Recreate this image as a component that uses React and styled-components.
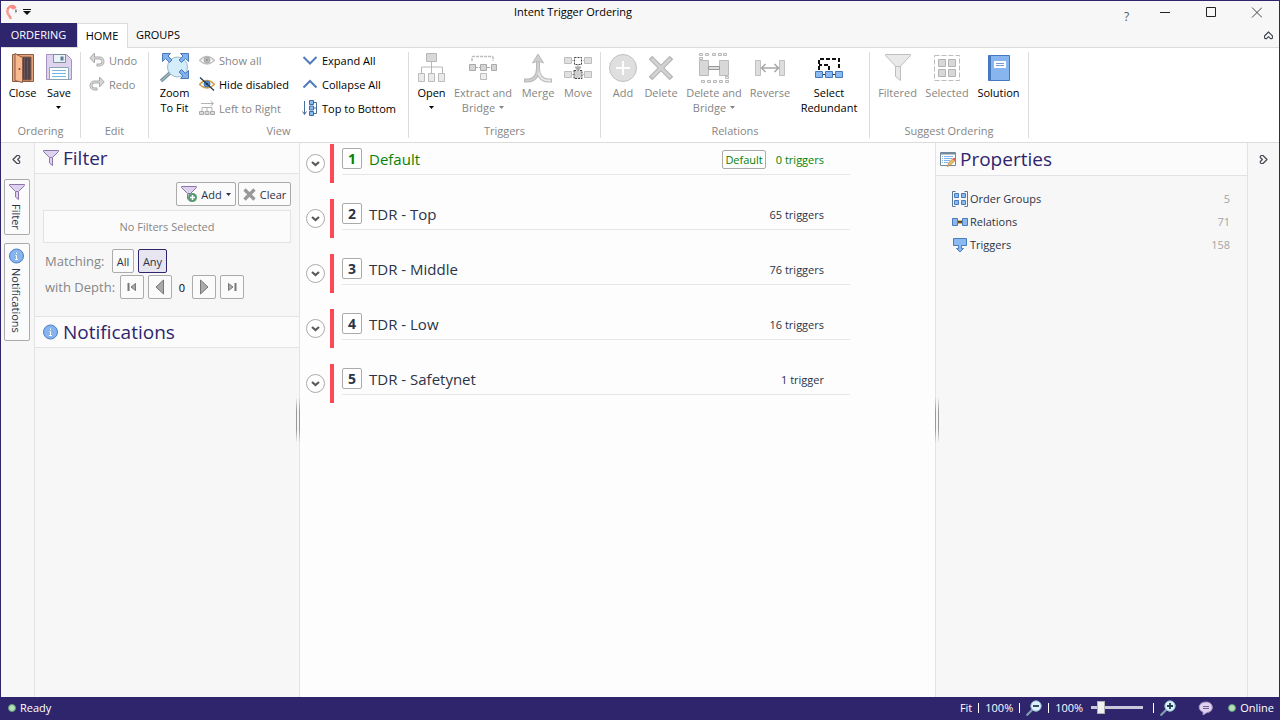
import React from "react";
import styled, { createGlobalStyle, css } from "styled-components";

const c = {
  brand: "#2f256d",
  chrome: "#f7f7f7",
  panel: "#f7f7f7",
  head: "#fbfbfb",
  canvas: "#fdfdfd",
  line: "#e3e3e6",
  ribbonLine: "#dcdcdc",
  muted: "#868686",
  text: "#2b3447",
  frame: "#ababab",
  green: "#058205",
  red: "#ff4a55",
};

const GlobalStyle = createGlobalStyle`
  * { box-sizing: border-box; }
  body {
    margin: 0;
    font-family: "Open Sans", "Noto Sans", sans-serif;
    font-size: 11px;
    line-height: 15px;
    color: #000;
  }
  button, input { font: inherit; color: inherit; }
  button { margin: 0; padding: 0; border: 0; background: none; white-space: nowrap; }
  h1, h2, p, ul, ol, dl, dd { margin: 0; padding: 0; font-weight: 400; }
  svg { display: block; flex: none; }
`;

const Window = styled.div`
  display: flex;
  flex-direction: column;
  min-height: 100vh;
  border: 1px solid ${c.brand};
  border-bottom: 0;
  background: ${c.chrome};
`;

/* Title bar */
const TitleBar = styled.header`
  display: flex;
  height: 22px;
`;
const QuickAccess = styled.div`
  display: flex;
  align-items: center;
  gap: 5px;
  width: 30px;
  padding-left: 5px;
`;
const WindowTitle = styled.h1`
  flex: 1;
  text-align: center;
  font-size: 11px;
  line-height: 22px;
`;
const CaptionButton = styled.button`
  display: flex;
  align-items: center;
  justify-content: center;
  width: 46px;
  height: 22px;
`;
const HelpButton = styled.button`
  width: 26px;
  padding: 8px 3px 0 0;
  font-size: 12px;
  color: #555;
`;

/* Tabs */
const TabBar = styled.nav`
  display: flex;
  align-items: stretch;
  height: 24px;
`;
const Tab = styled.button`
  padding: 0 8px 2px 7px;
  border: 1px solid transparent;
  border-width: 1px 1px 0;
  ${(p) => p.$kind === "file" && css`
    width: 76px;
    background: ${c.brand};
    color: #fff;
    border-color: ${c.brand};
  `}
  ${(p) => p.$kind === "active" && css`
    width: 51px;
    height: 25px;
    background: #fff;
    border-color: ${c.ribbonLine};
    position: relative;
  `}
`;
const CollapseRibbon = styled.button`
  margin-left: auto;
  width: 21px;
  display: grid;
  place-items: center;
`;

/* Ribbon */
const RibbonBar = styled.div`
  display: flex;
  height: 96px;
  padding: 4px 0;
  background: #fff;
  border: 1px solid ${c.ribbonLine};
  border-width: 1px 0;
`;
const RibbonGroup = styled.section`
  display: flex;
  flex-direction: column;
  padding: 0 ${(p) => p.$pad || 3}px;
  border-right: 1px solid ${c.ribbonLine};
`;
const GroupTools = styled.div`
  display: flex;
  flex: 1;
  gap: ${(p) => p.$gap || 0}px;
`;
const GroupLabel = styled.p`
  text-align: center;
  color: ${c.muted};
`;
const BigButton = styled.button`
  display: flex;
  flex-direction: column;
  align-items: center;
  width: ${(p) => p.$w}px;
  color: ${(p) => (p.disabled ? c.muted : "#000")};
`;
const BigText = styled.span`
  padding-top: 1px;
`;
const Line = styled.span`
  display: flex;
  align-items: center;
  justify-content: center;
  gap: 4px;
  height: 15px;
`;
const SmallColumn = styled.div`
  display: flex;
  flex-direction: column;
  margin-top: -4px;
  min-width: ${(p) => p.$w || 0}px;
`;
const SmallButton = styled.button`
  display: flex;
  align-items: center;
  gap: 4px;
  height: 24px;
  color: ${(p) => (p.disabled ? c.muted : "#000")};
`;

/* Work area */
const Work = styled.main`
  display: flex;
  flex: 1;
`;
const Rail = styled.nav`
  display: flex;
  flex-direction: column;
  align-items: center;
  gap: 8px;
  width: ${(p) => (p.$right ? 32 : 34)}px;
  padding: ${(p) => (p.$right ? "8px 0" : "8px 5px 8px 3px")};
  background: ${c.panel};
  border-${(p) => (p.$right ? "left" : "right")}: 1px solid ${c.line};
`;
const RailToggle = styled.button`
  display: grid;
  place-items: center;
  width: 20px;
  height: 17px;
  margin-bottom: 3px;
`;
const RailTab = styled.button`
  display: flex;
  flex-direction: column;
  align-items: center;
  gap: 4px;
  width: 26px;
  min-height: ${(p) => p.$h}px;
  padding: 4px 0;
  border: 1px solid ${c.frame};
  border-radius: 2px;
  background: ${c.head};
  color: ${c.text};
`;
const Vertical = styled.span`
  writing-mode: vertical-rl;
`;
const SidePanel = styled.aside`
  position: relative;
  width: ${(p) => p.$w}px;
  background: ${c.panel};
  border-${(p) => p.$edge}: 1px solid ${c.line};
`;
const PanelHead = styled.h2`
  display: flex;
  align-items: center;
  gap: 4px;
  height: ${(p) => p.$h || 31}px;
  padding-left: ${(p) => p.$pad || 8}px;
  background: ${c.head};
  border-bottom: 1px solid ${c.line};
  border-top: ${(p) => (p.$top ? `1px solid ${c.line}` : 0)};
  color: ${c.brand};
  font-size: 19px;
  line-height: 30px;
`;
const Grip = styled.span`
  position: absolute;
  top: 255px;
  ${(p) => p.$side}: -1px;
  width: 4px;
  height: 44px;
  border: 1px solid;
  border-width: 0 1px;
  border-image: linear-gradient(transparent, #999 30%, #999 70%, transparent) 1;
`;
const FilterBody = styled.div`
  display: flex;
  flex-direction: column;
  gap: 2px;
  padding: 8px 8px 17px;
`;
const FilterActions = styled.div`
  display: flex;
  justify-content: flex-end;
  gap: 2px;
`;
const FrameButton = styled.button`
  display: flex;
  align-items: center;
  justify-content: center;
  gap: 4px;
  height: 24px;
  min-width: ${(p) => p.$w || 24}px;
  border: 1px solid ${(p) => (p.$on ? c.brand : c.frame)};
  border-radius: 2px;
  background: ${(p) => (p.$on ? "#e6e5f0" : c.head)};
  color: ${c.text};
`;
const EmptyBox = styled.p`
  margin: 2px 0 4px;
  border: 1px solid ${c.line};
  background: ${c.head};
  text-align: center;
  line-height: 31px;
  color: ${c.muted};
`;
const OptionRow = styled.div`
  display: flex;
  align-items: center;
  gap: 4px;
  padding-left: 2px;
`;
const OptionLabel = styled.span`
  min-width: ${(p) => p.$w}px;
  font-size: 13px;
  color: ${c.muted};
`;
const Depth = styled.output`
  width: 12px;
  text-align: center;
  color: #000;
`;

/* Order groups */
const Canvas = styled.section`
  flex: 1;
  min-width: 0;
  background: ${c.canvas};
`;
const GroupList = styled.ol`
  display: flex;
  flex-direction: column;
  gap: 16px;
  padding: 1px 85px 16px 6px;
  list-style: none;
`;
const GroupRow = styled.li`
  display: flex;
  align-items: center;
  height: 39px;
  color: ${(p) => (p.$default ? c.green : c.text)};
`;
const Expander = styled.button`
  display: grid;
  place-items: center;
  width: 19px;
  height: 19px;
  border: 1px solid ${c.frame};
  border-radius: 50%;
  background: #fff;
`;
const ColorBar = styled.span`
  align-self: stretch;
  width: 4px;
  margin: 0 8px 0 5px;
  background: ${c.red};
`;
const RowContent = styled.div`
  display: flex;
  align-items: center;
  flex: 1;
  align-self: flex-start;
  height: 31px;
  padding-right: 26px;
  border-bottom: 1px solid #e5e5ec;
`;
const OrderNumber = styled.span`
  width: 20px;
  height: 21px;
  margin: 0 7px 2px 0;
  border: 1px solid ${c.frame};
  border-radius: 2px;
  background: #fff;
  text-align: center;
  font-size: 14px;
  font-weight: 700;
  line-height: 19px;
`;
const GroupName = styled.span`
  flex: 1;
  font-size: 15px;
`;
const Badge = styled.span`
  margin-right: 10px;
  padding: 0 2px;
  border: 1px solid ${c.frame};
  border-radius: 2px;
  background: #fff;
  line-height: 17px;
`;
const TriggerCount = styled.span``;

/* Properties */
const PropertyList = styled.dl`
  padding: 11px 17px 11px 16px;
  color: ${c.text};
`;
const Property = styled.div`
  display: flex;
  align-items: center;
  gap: 2px;
  height: 23px;
`;
const PropertyName = styled.dt`
  flex: 1;
`;
const PropertyValue = styled.dd`
  color: #a5a5a5;
`;

/* Status bar */
const StatusBar = styled.footer`
  display: flex;
  align-items: center;
  height: 23px;
  padding: 0 5px 2px 7px;
  background: ${c.brand};
  color: #fff;
`;
const StatusItem = styled.span`
  display: flex;
  align-items: center;
  gap: 4px;
  margin-right: ${(p) => (p.$push ? "auto" : 0)};
`;
const ZoomTools = styled.div`
  display: flex;
  align-items: center;
  gap: 6px;
  margin-right: 22px;
`;
const Divider = styled.span`
  width: 1px;
  height: 10px;
  background: #fff;
`;
const StatusButton = styled.button`
  display: flex;
`;
const ZoomSlider = styled.input`
  appearance: none;
  width: 52px;
  height: 14px;
  margin: 0 4px 0 2px;
  background: linear-gradient(#c9c7dc, #c9c7dc) center / 100% 3px no-repeat;
  &::-webkit-slider-thumb {
    appearance: none;
    width: 8px;
    height: 13px;
    background: #f0f0f0;
    border: 1px solid #b0b0b0;
  }
`;
const ChatButton = styled.button`
  display: flex;
  margin-right: 14px;
`;
const Dot = styled.i`
  width: 8px;
  height: 8px;
  border: 1px solid #5d9a78;
  border-radius: 50%;
  background: #b5dfb9;
`;

/* Icons */
const Svg = ({ s = 16, w = s, h = s, children }) => (
  <svg width={w} height={h} viewBox={`0 0 ${w} ${h}`} fill="none" aria-hidden="true">{children}</svg>
);
const Caret = () => <Svg w={5} h={3}><path d="M0 0h5L2.5 3z" fill="currentColor" /></Svg>;

const Flamingo = () => (
  <Svg w={12} h={16}>
    <path d="M9.500 4.500C8 1.500 6 1.500 4 2.500C.8 4.500.8 8.500 2.800 11C4 12.600 4.500 13.500 4.800 15" stroke="#f98b82" strokeWidth="2.400" />
    <circle cx="7" cy="3.300" r="2.100" fill="#f98b82" />
    <path d="M9 5.500h1.500l.5 2-1.500 1.800z" fill="#8b777b" />
    <path d="M1 6l2 1M1 9l2 0M2 11l2-1M4 14l2-1" stroke="#fbc1ba" strokeWidth=".8" />
  </Svg>
);
const QuickMenu = () => <Svg w={8} h={7}><path d="M0 0h8v1H0z M0 2h8L4 6z" fill="#111" /></Svg>;

const DoorIcon = () => (
  <Svg s={32}>
    <path d="M5.500 2.500h21v27h-21z" fill="#e4a57c" stroke="#8e5c45" />
    <path d="M14 5h10v23H14z" fill="#504249" stroke="#8e5c45" />
    <path d="M17 6h1v21h-1zM20 6h1v21h-1z" fill="#67575c" />
    <path d="M8 1.500l7.500 4v25L8 28.500z" fill="#f7b98d" stroke="#8e5c45" />
    <circle cx="12.500" cy="17" r="1" fill="#70463b" />
  </Svg>
);
const SaveIcon = () => (
  <Svg s={32}>
    <path d="M3.500 2.500h20l5 5v20h-25z" fill="#ded2ef" stroke="#a791bd" />
    <path d="M10.500 2.500h12v8h-12z" fill="#e9f2f6" stroke="#7d9199" />
    <path d="M17.500 4.500h3v4h-3z" fill="#5d7f98" />
    <path d="M6.500 15.500h19v12h-19z" fill="#fff" stroke="#8aa5b6" />
    <path d="M9 18.500h14M9 21.500h14M9 24.500h14" stroke="#6fb6e3" />
  </Svg>
);
const arrowHead = "M1.500 1.500h8l-2.500 2.500 4 4-2.500 2.500-4-4-3 3z";
const ZoomFitIcon = () => (
  <Svg s={32}>
    <path d="M12 20L2 29" stroke="#6f8995" strokeWidth="3.500" />
    <path d="M12 20L2 29" stroke="#a2bac5" strokeWidth="1.500" />
    <circle cx="18.500" cy="15" r="10" fill="#d3eefa" stroke="#9cb8c4" />
    <g fill="#83b1eb" stroke="#4978bc">
      <path d={arrowHead} transform="translate(2 0)" />
      <path d={arrowHead} transform="translate(31 0) scale(-1 1)" />
      <path d={arrowHead} transform="translate(31 28) scale(-1 -1)" />
    </g>
  </Svg>
);
const OpenIcon = () => (
  <Svg s={32}>
    <path d="M15.500 9v12M5.500 21v-6h21v6" stroke="#b7b7b7" />
    <path d="M10.500 1.500h10v8h-10z" fill="#d8d8d8" stroke="#b7b7b7" />
    <path d="M2.500 21.500h6v8h-6zM12.500 21.500h6v8h-6zM22.500 21.500h6v8h-6z" fill="#eaeaea" stroke="#bcbcbc" />
  </Svg>
);
const ExtractIcon = () => (
  <Svg s={32}>
    <path d="M5 9V5.500q0-1 1-1h19q1 0 1 1V9" stroke="#bcbcbc" strokeWidth="1.500" strokeDasharray="3 1" />
    <path d="M8 15.500h15" stroke="#aaa" strokeDasharray="3 1" />
    <path d="M2.500 12.500h6v6h-6zM13.500 12.500h6v6h-6zM24.500 12.500h5v6h-5z" fill="#d5d5d5" stroke="#aaa" />
    <path d="M13.500 21.500h6v6h-6z" fill="#efefef" stroke="#bbb" />
  </Svg>
);
const MergeIcon = () => (
  <Svg s={32}>
    <path d="M2 28.500h4c6 0 10-5 10-12V7" stroke="#b9b9b9" strokeWidth="4" />
    <path d="M30 28.500h-4c-6 0-10-5-10-12" stroke="#b9b9b9" strokeWidth="4" />
    <path d="M29 28.500h-3c-6 0-10-5-10-12" stroke="#e8e8e8" strokeWidth="2" />
    <path d="M3 28.500h3c6 0 10-5 10-12V7" stroke="#cfcfcf" strokeWidth="2" />
    <path d="M16 2l5.500 9-5.500-2-5.500 2z" fill="#cfcfcf" stroke="#b9b9b9" />
  </Svg>
);
const MoveIcon = () => (
  <Svg s={32}>
    <path d="M9 8.500h3M21 8.500h3M9 22.500h3M21 22.500h3" stroke="#bbb" />
    <path d="M2.500 5.500h7v6h-7zM22.500 5.500h7v6h-7zM2.500 19.500h7v6h-7zM22.500 19.500h7v6h-7z" fill="#e0e0e0" stroke="#bebebe" />
    <path d="M12.500 5.500h7v7h-7z" stroke="#444" strokeDasharray="2 1" />
    <path d="M12 18.500h8v8h-8z" fill="#cfcfcf" stroke="#444" strokeDasharray="2 1" />
    <path d="M16 12v3h3l-3 4-3-4h3" fill="#aaa" stroke="#aaa" />
  </Svg>
);
const AddIcon = () => (
  <Svg s={32}>
    <circle cx="16" cy="16" r="13.500" fill="#dfdfdf" stroke="#c0c0c0" />
    <path d="M16 9v14M9 16h14" stroke="#fff" strokeWidth="2" />
  </Svg>
);
const DeleteIcon = () => (
  <Svg s={32}>
    <path d="M5.500 5.500l21 21M26.500 5.500l-21 21" stroke="#b4b4b4" strokeWidth="5" />
    <path d="M6.500 6.500l19 19M25.500 6.500l-19 19" stroke="#d2d2d2" strokeWidth="3" />
  </Svg>
);
const DeleteBridgeIcon = () => (
  <Svg s={32}>
    <path d="M1.500 1.500h3v2h-3zM7.500 1.500h3v2h-3zM14.500 1.500h3v2h-3zM20.500 1.500h3v2h-3zM25.500 1.500h3v2h-3zM3.500 28.500h3v2h-3zM9.500 28.500h3v2h-3zM15.500 28.500h3v2h-3zM21.500 28.500h3v2h-3zM27.500 28.500h3v2h-3zM1.500 5.500h3v2h-3zM27.500 24.500h3v2h-3z" fill="#f2f2f2" stroke="#b8b8b8" />
    <path d="M1.500 8.500h9v15h-9zM21.500 8.500h9v15h-9z" fill="#d8d8d8" stroke="#bbb" />
    <path d="M10.500 14.500h11v3h-11z" fill="#ddd" stroke="#999" />
  </Svg>
);
const ReverseIcon = () => (
  <Svg s={32}>
    <path d="M1.500 8.500h5v15h-5zM25.500 8.500h5v15h-5z" fill="#ddd" stroke="#c1c1c1" />
    <path d="M8 16h16M11.500 12l-4 4 4 4M20.500 12l4 4-4 4" stroke="#a6a6a6" strokeWidth="1.500" />
  </Svg>
);
const RedundantIcon = () => (
  <Svg s={32}>
    <path d="M6 18V7h20v11M16 18v-5H6" stroke="#111" strokeWidth="2" strokeDasharray="4 2" />
    <path d="M9 22.500h14" stroke="#333" />
    <path d="M2.500 19.500h7v6h-7zM12.500 19.500h7v6h-7zM22.500 19.500h7v6h-7z" fill="#8bbaf3" stroke="#4478bb" />
  </Svg>
);
const BigFilterIcon = () => (
  <Svg s={32}>
    <path d="M3.500 2.500h25v1l-10 10.500v14.500l-5-4V14L3.500 3.500z" fill="#e9e9e9" stroke="#bebebe" />
    <path d="M14 14.500h4" stroke="#bebebe" />
  </Svg>
);
const SelectedIcon = () => (
  <Svg s={32}>
    <path d="M3.500 3.500h25v25h-25z" stroke="#bdbdbd" strokeDasharray="5 2" />
    <path d="M7.500 7.500h7v7h-7zM17.500 7.500h7v7h-7zM7.500 17.500h7v7h-7zM17.500 17.500h7v7h-7z" fill="#d7d7d7" stroke="#b3b3b3" />
  </Svg>
);
const SolutionIcon = () => (
  <Svg s={32}>
    <path d="M5.500 3.500h21v25h-21z" fill="#89b5ef" stroke="#4679be" />
    <path d="M6 4h2v24H6z" fill="#4679be" />
    <path d="M11 9h12v7H11z" fill="#fff" />
    <path d="M13 11.500h8M13 13.500h8" stroke="#779ccb" />
  </Svg>
);

const UndoIcon = ({ flip }) => (
  <Svg>
    <g transform={flip ? "translate(16 0) scale(-1 1)" : undefined}>
      <path d="M5 6h5.500a3.500 3.500 0 0 1 0 7H7.500" stroke="#ababab" strokeWidth="3" />
      <path d="M5.500 1L.8 6l4.700 5z" fill="#d6d6d6" stroke="#ababab" />
      <path d="M4 6h6.500a3.500 3.500 0 0 1 0 7H8.500" stroke="#dedede" strokeWidth="1.200" />
    </g>
  </Svg>
);
const EyeIcon = ({ off }) => (
  <Svg>
    <path d="M.5 8.500Q8 .5 15.500 8.500Q8 15.500.5 8.500z" fill="#f8f8f8" stroke={off ? "#cf9f45" : "#c2c2c2"} strokeWidth="1.300" />
    <circle cx="8" cy="8" r="3" fill={off ? "#5b91d4" : "#bbb"} stroke={off ? "#3973b8" : "#aaa"} />
    <circle cx="8" cy="8" r="1.200" fill={off ? "#172b49" : "#999"} />
    {off && <path d="M1 1.500l14 13" stroke="#263d57" strokeWidth="1.300" />}
  </Svg>
);
const LeftRightIcon = () => (
  <Svg>
    <path d="M2 3.500h12M11.500 1l3 2.500-3 2.500M3 11V7.500h10V11M8 7.500V11" stroke="#b3b3b3" />
    <path d="M.5 11.500h4v3h-4zM6 11.500h4v3H6zM11.500 11.500h4v3h-4z" fill="#ddd" stroke="#aaa" />
  </Svg>
);
const TopBottomIcon = () => (
  <Svg>
    <path d="M2.500 1v13M.5 11.500l2 3 2-3M11.500 2.500h3v11h-3M11.500 8h3" stroke="#496d9c" />
    <path d="M7.500.5h4v4h-4zM7.500 6h4v4h-4zM7.500 11.500h4v4h-4z" fill="#8bbaf3" stroke="#3e6ca8" />
  </Svg>
);
const Angle = ({ up }) => (
  <Svg><path d={up ? "M1.500 11.500L8 5l6.500 6.500" : "M1.500 5L8 11.500 14.500 5"} stroke="#4f7dbb" strokeWidth="2" /></Svg>
);
const FilterIcon = ({ add }) => (
  <Svg>
    <path d="M.5.500h15v1l-6 6v8l-3-2.500v-5.500l-6-6z" fill="#ddd2ef" stroke="#8e74a9" />
    <path d="M7 7.500h2" stroke="#8e74a9" />
    {add && <><circle cx="11.500" cy="11.500" r="4.500" fill="#559a70" /><path d="M11.500 9v5M9 11.500h5" stroke="#fff" strokeWidth="1.500" /></>}
  </Svg>
);
const ClearIcon = () => <Svg w={13} h={13}><path d="M1.500 1.500l10 10M11.500 1.500l-10 10" stroke="#999" strokeWidth="3.200" /></Svg>;
const InfoIcon = () => (
  <Svg>
    <circle cx="7.500" cy="8" r="7" fill="#85b4ee" stroke="#4d80c0" />
    <path d="M7.500 4.500V6M6.500 7.500h1v4M6 11.500h3" stroke="#fff" />
  </Svg>
);
const PropertiesIcon = () => (
  <Svg>
    <path d="M.5 1.500h15v13H.5z" fill="#fff" stroke="#74899a" />
    <path d="M1 2h14v1.500H1z" fill="#74899a" />
    <path d="M2 5.500h1M4 5.500h9M2 7.500h1M4 7.500h8M2 9.500h1M4 9.500h6M2 11.500h1M4 11.500h4" stroke="#7fb4ee" />
    <path d="M7.500 15.500l1-3.500L13 7.500l2 2-4.500 4.500z" fill="#e9bd69" stroke="#a37c3f" strokeWidth=".7" />
    <path d="M12.500 8L14 6.500 16 8.300 14.800 10z" fill="#e45c5c" />
  </Svg>
);
const OrderGroupsIcon = () => (
  <Svg>
    <path d="M3.500.5h-3v15h3M12.500.5h3v15h-3" stroke="#5b7691" />
    <path d="M2.500 2.500h4v4h-4zM9.500 2.500h4v4h-4zM2.500 9.500h4v4h-4zM9.500 9.500h4v4h-4z" fill="#8bbaf3" stroke="#477bbb" />
  </Svg>
);
const RelationsIcon = () => (
  <Svg>
    <path d="M5 6h6v4H5z" fill="#edb252" />
    <path d="M5 8h6" stroke="#564f4b" strokeWidth="2" />
    <path d="M.5 4.500h5v7h-5zM10.500 4.500h5v7h-5z" fill="#8bbaf3" stroke="#477bbb" />
  </Svg>
);
const TriggersIcon = () => <Svg><path d="M1.500 1.500h13v7h-5v3h2L8 15l-3.500-3.500h2v-3h-5z" fill="#8bbaf3" stroke="#477bbb" /></Svg>;
const MagnifierIcon = ({ plus }) => (
  <Svg>
    <path d="M7 9l-6.500 6.500" stroke="#7fa0ae" strokeWidth="2.200" />
    <circle cx="10" cy="6" r="5.200" fill="#d9f3fc" stroke="#98bac8" />
    <path d={plus ? "M10 3v6M7 6h6" : "M7 6h6"} stroke="#253e50" strokeWidth="1.800" />
  </Svg>
);
const ChatIcon = () => (
  <Svg>
    <path d="M8 2c8 0 8.500 10 1 10.500L5 15v-3C-1 10 0 2 8 2z" fill="#ded2ef" stroke="#a48cbd" />
    <path d="M5 6.500h6M5 8.500h6" stroke="#725c91" />
  </Svg>
);
const BoldChevron = ({ turn = 0 }) => (
  <Svg w={9} h={9}>
    <path d="M4.500 1L8.500 5v2l-1 .7h-1L4.500 5.700 2.500 7.700h-1L.5 7V5z" transform={`rotate(${turn} 4.500 4.500)`} stroke="#434a56" strokeWidth="1.200" strokeLinejoin="round" />
  </Svg>
);
const ExpandGlyph = () => <Svg w={9} h={6}><path d="M1 1l3.500 3L8 1" stroke="#5a5a5a" strokeWidth="2.200" /></Svg>;
const StepIcon = ({ end, flip }) => (
  <Svg>
    <g transform={flip ? "translate(16 0) scale(-1 1)" : undefined} fill="#ababab" stroke="#777">
      {end ? <><path d="M4.500 4v8" strokeWidth="2" /><path d="M11.500 4.500v7L7 8z" /></> : <path d="M11.500 1v14L4 8z" />}
    </g>
  </Svg>
);

const Big = ({ icon: Icon, lines, w, disabled, menu }) => (
  <BigButton $w={w} disabled={disabled}>
    <Icon />
    <BigText>
      {lines.map((l, i) => (
        <Line key={i}>{l}{menu && i === lines.length - 1 && <Caret />}</Line>
      ))}
    </BigText>
  </BigButton>
);
const Small = ({ icon, children, disabled }) => <SmallButton disabled={disabled}>{icon}{children}</SmallButton>;

const triggerTools = [
  { icon: OpenIcon, lines: ["Open", ""], w: 37, menu: true },
  { icon: ExtractIcon, lines: ["Extract and", "Bridge"], w: 66, menu: true, disabled: true },
  { icon: MergeIcon, lines: ["Merge"], w: 44, disabled: true },
  { icon: MoveIcon, lines: ["Move"], w: 36, disabled: true },
];
const relationTools = [
  { icon: AddIcon, lines: ["Add"], w: 36, disabled: true },
  { icon: DeleteIcon, lines: ["Delete"], w: 40, disabled: true },
  { icon: DeleteBridgeIcon, lines: ["Delete and", "Bridge"], w: 66, menu: true, disabled: true },
  { icon: ReverseIcon, lines: ["Reverse"], w: 46, disabled: true },
  { icon: RedundantIcon, lines: ["Select", "Redundant"], w: 72 },
];
const suggestTools = [
  { icon: BigFilterIcon, lines: ["Filtered"], w: 47, disabled: true },
  { icon: SelectedIcon, lines: ["Selected"], w: 52, disabled: true },
  { icon: SolutionIcon, lines: ["Solution"], w: 51 },
];
const groups = [
  { name: "Default", count: "0 triggers", isDefault: true },
  { name: "TDR - Top", count: "65 triggers" },
  { name: "TDR - Middle", count: "76 triggers" },
  { name: "TDR - Low", count: "16 triggers" },
  { name: "TDR - Safetynet", count: "1 trigger" },
];
const properties = [
  { icon: OrderGroupsIcon, name: "Order Groups", value: 5 },
  { icon: RelationsIcon, name: "Relations", value: 71 },
  { icon: TriggersIcon, name: "Triggers", value: 158 },
];

const ToolGroup = ({ label, tools }) => (
  <RibbonGroup $pad={4}>
    <GroupTools>{tools.map((t) => <Big key={t.lines[0]} {...t} />)}</GroupTools>
    <GroupLabel>{label}</GroupLabel>
  </RibbonGroup>
);

export default function App() {
  return (
    <Window>
      <GlobalStyle />
      <TitleBar>
        <QuickAccess><Flamingo /><button aria-label="Customize quick access"><QuickMenu /></button></QuickAccess>
        <WindowTitle>Intent Trigger Ordering</WindowTitle>
        <HelpButton aria-label="Help">?</HelpButton>
        <CaptionButton aria-label="Minimize"><Svg w={11} h={11}><path d="M1 5.500h10" stroke="#222" /></Svg></CaptionButton>
        <CaptionButton aria-label="Maximize"><Svg w={11} h={11}><path d="M1.500.5h9v9h-9z" stroke="#222" /></Svg></CaptionButton>
        <CaptionButton aria-label="Close window"><Svg w={11} h={11}><path d="M1 .5l10 10M11 .5L1 10.500" stroke="#444" /></Svg></CaptionButton>
      </TitleBar>
      <TabBar>
        <Tab $kind="file">ORDERING</Tab>
        <Tab $kind="active">HOME</Tab>
        <Tab>GROUPS</Tab>
        <CollapseRibbon aria-label="Collapse ribbon"><BoldChevron /></CollapseRibbon>
      </TabBar>
      <RibbonBar>
        <RibbonGroup>
          <GroupTools>
            <Big icon={DoorIcon} lines={["Close"]} w={37} />
            <Big icon={SaveIcon} lines={["Save", ""]} w={36} menu />
          </GroupTools>
          <GroupLabel>Ordering</GroupLabel>
        </RibbonGroup>
        <RibbonGroup $pad={8}>
          <GroupTools>
            <SmallColumn $w={51}>
              <Small disabled icon={<UndoIcon />}>Undo</Small>
              <Small disabled icon={<UndoIcon flip />}>Redo</Small>
            </SmallColumn>
          </GroupTools>
          <GroupLabel>Edit</GroupLabel>
        </RibbonGroup>
        <RibbonGroup $pad={5}>
          <GroupTools $gap={4}>
            <Big icon={ZoomFitIcon} lines={["Zoom", "To Fit"]} w={41} />
            <SmallColumn $w={99}>
              <Small disabled icon={<EyeIcon />}>Show all</Small>
              <Small icon={<EyeIcon off />}>Hide disabled</Small>
              <Small disabled icon={<LeftRightIcon />}>Left to Right</Small>
            </SmallColumn>
            <SmallColumn $w={101}>
              <Small icon={<Angle />}>Expand All</Small>
              <Small icon={<Angle up />}>Collapse All</Small>
              <Small icon={<TopBottomIcon />}>Top to Bottom</Small>
            </SmallColumn>
          </GroupTools>
          <GroupLabel>View</GroupLabel>
        </RibbonGroup>
        <ToolGroup label="Triggers" tools={triggerTools} />
        <ToolGroup label="Relations" tools={relationTools} />
        <ToolGroup label="Suggest Ordering" tools={suggestTools} />
      </RibbonBar>

      <Work>
        <Rail>
          <RailToggle aria-label="Collapse left panels"><BoldChevron turn={-90} /></RailToggle>
          <RailTab $h={56}><FilterIcon /><Vertical>Filter</Vertical></RailTab>
          <RailTab $h={98}><InfoIcon /><Vertical>Notifications</Vertical></RailTab>
        </Rail>
        <SidePanel $w={265} $edge="right">
          <PanelHead><FilterIcon />Filter</PanelHead>
          <FilterBody>
            <FilterActions>
              <FrameButton $w={60}><FilterIcon add />Add<Caret /></FrameButton>
              <FrameButton $w={53}><ClearIcon />Clear</FrameButton>
            </FilterActions>
            <EmptyBox>No Filters Selected</EmptyBox>
            <OptionRow role="group" aria-label="Matching">
              <OptionLabel $w={63}>Matching:</OptionLabel>
              <FrameButton $w={22} aria-pressed="false">All</FrameButton>
              <FrameButton $w={29} $on aria-pressed="true">Any</FrameButton>
            </OptionRow>
            <OptionRow role="group" aria-label="with Depth">
              <OptionLabel $w={71}>with Depth:</OptionLabel>
              <FrameButton aria-label="First"><StepIcon end /></FrameButton>
              <FrameButton aria-label="Previous"><StepIcon /></FrameButton>
              <Depth>0</Depth>
              <FrameButton aria-label="Next"><StepIcon flip /></FrameButton>
              <FrameButton aria-label="Last"><StepIcon end flip /></FrameButton>
            </OptionRow>
          </FilterBody>
          <PanelHead $top $h={32}><InfoIcon />Notifications</PanelHead>
          <Grip $side="right" />
        </SidePanel>

        <Canvas>
          <GroupList>
            {groups.map((g, i) => (
              <GroupRow key={g.name} $default={g.isDefault}>
                <Expander aria-label={`Expand ${g.name}`}><ExpandGlyph /></Expander>
                <ColorBar />
                <RowContent>
                  <OrderNumber>{i + 1}</OrderNumber>
                  <GroupName>{g.name}</GroupName>
                  {g.isDefault && <Badge>Default</Badge>}
                  <TriggerCount>{g.count}</TriggerCount>
                </RowContent>
              </GroupRow>
            ))}
          </GroupList>
        </Canvas>

        <SidePanel $w={312} $edge="left">
          <PanelHead $h={33} $pad={4}><PropertiesIcon />Properties</PanelHead>
          <PropertyList>
            {properties.map(({ icon: Icon, name, value }) => (
              <Property key={name}>
                <Icon />
                <PropertyName>{name}</PropertyName>
                <PropertyValue>{value}</PropertyValue>
              </Property>
            ))}
          </PropertyList>
          <Grip $side="left" />
        </SidePanel>
        <Rail $right>
          <RailToggle aria-label="Collapse right panel"><BoldChevron turn={90} /></RailToggle>
        </Rail>
      </Work>

      <StatusBar>
        <StatusItem $push><Dot />Ready</StatusItem>
        <ZoomTools>
          <StatusButton>Fit</StatusButton>
          <Divider />
          <StatusButton>100%</StatusButton>
          <Divider />
          <StatusButton aria-label="Zoom out"><MagnifierIcon /></StatusButton>
          <Divider />
          <span>100%</span>
          <ZoomSlider type="range" aria-label="Zoom" min="0" max="100" defaultValue="14" />
          <Divider />
          <StatusButton aria-label="Zoom in"><MagnifierIcon plus /></StatusButton>
        </ZoomTools>
        <ChatButton aria-label="Feedback"><ChatIcon /></ChatButton>
        <StatusItem><Dot />Online</StatusItem>
      </StatusBar>
    </Window>
  );
}
